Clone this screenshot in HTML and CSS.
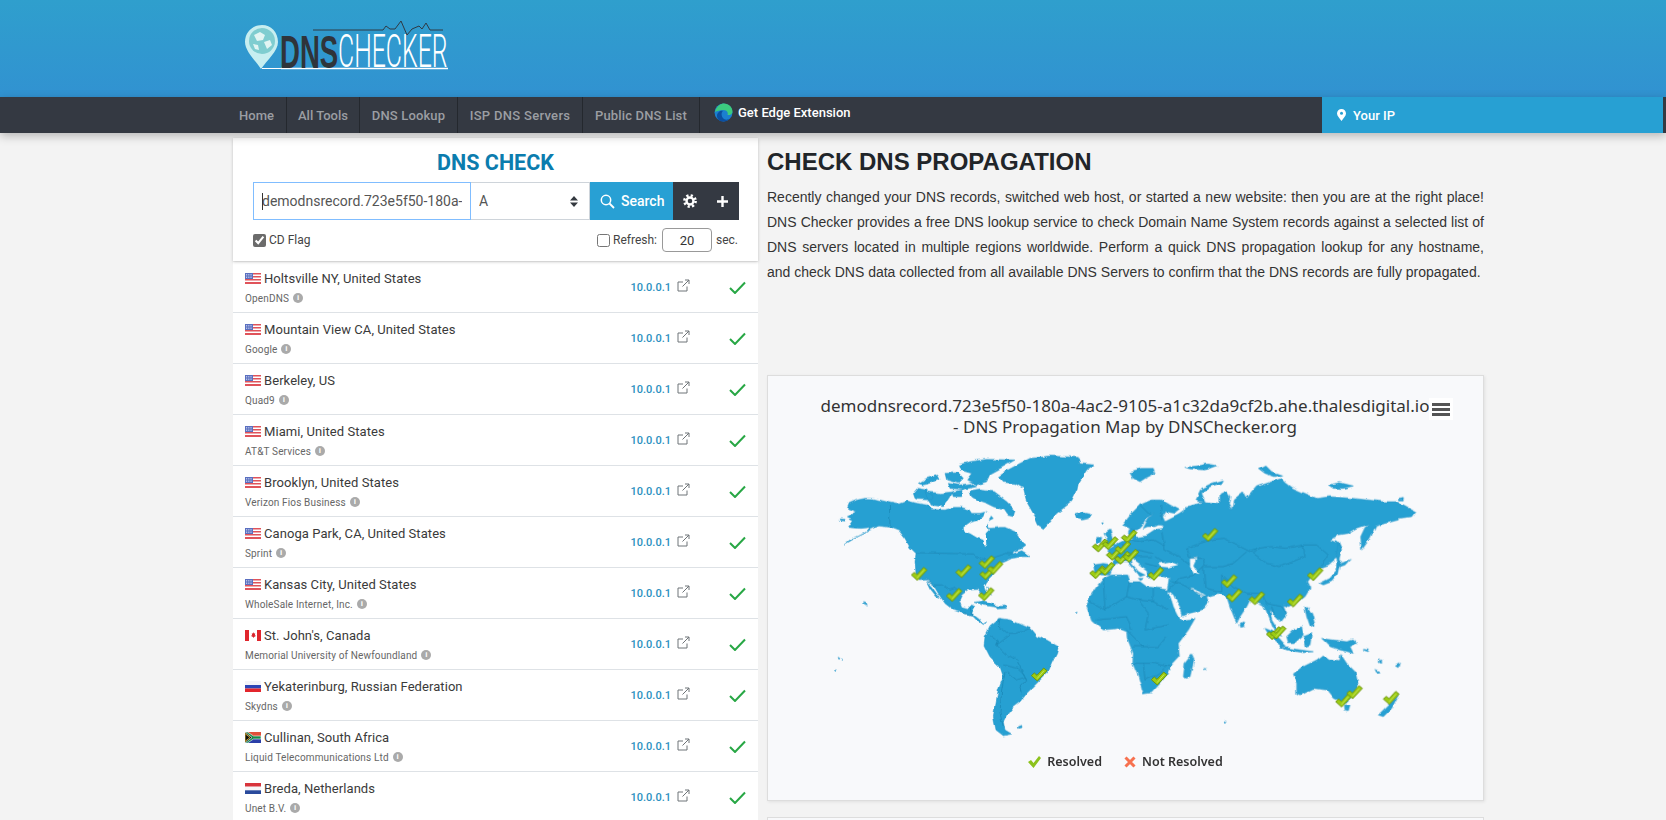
FILE: index.html
```html
<!DOCTYPE html>
<html lang="en">
<head>
<meta charset="utf-8">
<title>DNS Checker - DNS Check Propagation</title>
<link rel="stylesheet" href="styles.css">
</head>
<body>
<svg class="defs" width="0" height="0" aria-hidden="true">
  <defs>
    <symbol id="f-us" viewBox="0 0 16 11"><rect width="16" height="11" fill="#fff"/><path d="M0 0h16v1.500H0zM0 3h16v1.500H0zM0 6h16v1.500H0zM0 9h16v2H0z" fill="#e0535a"/><rect width="8" height="6" fill="#5a6fc0"/><path d="M1 1.500h6M1 3h6M1 4.500h6" stroke="#dfe6f7" stroke-width=".7" stroke-dasharray="1 .8"/></symbol>
    <symbol id="f-ca" viewBox="0 0 16 11"><rect width="16" height="11" fill="#fff"/><rect width="4" height="11" fill="#e0262d"/><rect x="12" width="4" height="11" fill="#e0262d"/><path d="M8 2l1 1.600 1.200-.4-.4 2.300 1-.3-.5 1.300-1.500.4V8h-.6V6.900l-1.500-.4-.5-1.300 1 .3-.4-2.300 1.200.4z" fill="#d9222a"/></symbol>
    <symbol id="f-ru" viewBox="0 0 16 11"><rect width="16" height="4" fill="#f4f4f8"/><rect y="4" width="16" height="3.500" fill="#2c45b5"/><rect y="7.500" width="16" height="3.500" fill="#e3252c"/></symbol>
    <symbol id="f-za" viewBox="0 0 16 11"><rect width="16" height="5.500" fill="#e0503a"/><rect y="5.500" width="16" height="5.500" fill="#2b3fa8"/><path d="M0 0l7 5.500L0 11" fill="#111"/><path d="M0 0h2.500l6 4H16v3H8.500l-6 4H0l7-5.500z" fill="#168a4a" stroke="#fff" stroke-width=".6"/><path d="M0 1.500l5 4-5 4z" fill="#111" stroke="#f3c530" stroke-width=".8"/></symbol>
    <symbol id="f-nl" viewBox="0 0 16 11"><rect width="16" height="3.700" fill="#d8343c"/><rect y="3.700" width="16" height="3.600" fill="#f6f6f8"/><rect y="7.300" width="16" height="3.700" fill="#2a4a9c"/></symbol>
    <symbol id="i-ext" viewBox="0 0 13 13"><path d="M10 7.500V12H1V3h5M5.500 7.500L12 1M8 1h4v4" fill="none" stroke="#6f7478" stroke-width="1"/></symbol>
    <symbol id="i-ok" viewBox="0 0 17 13"><path d="M1 7l5 5L16 1.500" fill="none" stroke="#28a745" stroke-width="2"/></symbol>
    <g id="chk">
      <path d="M-23 5l9-8 8 7 20-22 10 8-29 31z" fill="#9ccc12" stroke="#6d9412" stroke-width="3"/>
      <path d="M-6 14l21-24" stroke="#c6e45a" stroke-width="3" fill="none"/>
    </g>
    <filter id="rough" x="-5%" y="-5%" width="110%" height="110%">
      <feTurbulence type="fractalNoise" baseFrequency=".035" numOctaves="3" seed="4" result="n"/>
      <feDisplacementMap in="SourceGraphic" in2="n" scale="12" xChannelSelector="R" yChannelSelector="G"/>
    </filter>
  </defs>
</svg>

<header class="brand">
  <a class="logo" href="#" aria-label="DNS Checker">
    <svg width="210" height="68" viewBox="0 0 210 68">
      <g transform="translate(0 10)">
        <path d="M17 2C8 2 0 9 0 19c0 9 10 18 16 27 6-9 17-18 17-27C33 9 26 2 17 2z" fill="#c7eef0"/>
        <circle cx="17" cy="18" r="13" fill="#7fcdd0"/>
        <path d="M9 12l6-3 5 3-2 5-6 1zM19 19l6-2 2 5-5 4zM8 21l5 1 1 5-4-1z" fill="#e2f5f3"/>
        <path d="M17 45.500h20" stroke="#fff" stroke-width="1"/>
        <path d="M36 45.500h167" stroke="#fff" stroke-width="1.500"/>
        <path d="M68 7h70l3-4 4 3h5l6-8 6 14 5-6 7-3 3 3 4-6 4 7h13" fill="none" stroke="#2f3a44" stroke-width="1"/>
      </g>
      <text class="logo-dns" transform="translate(35 55) scale(.6 1)">DNS</text>
      <text class="logo-chk" transform="translate(93 54) scale(.54 1)">CHECKER</text>
    </svg>
  </a>
</header>

<nav class="topnav">
  <ul class="menu">
    <li class="m-home"><a href="#">Home</a></li>
    <li class="m-tools"><a href="#">All Tools</a></li>
    <li class="m-lookup"><a href="#">DNS Lookup</a></li>
    <li class="m-isp"><a href="#">ISP DNS Servers</a></li>
    <li class="m-public"><a href="#">Public DNS List</a></li>
    <li class="edge">
      <a href="#">
        <svg width="19" height="19" viewBox="0 0 19 19"><circle cx="9.500" cy="9.500" r="9" fill="#1b7fd0"/><path d="M1 9C2 3 7 .5 10 .5c5 0 8.500 4 8.500 8 0 3-3 4-5 3.500 1-2-.5-5-4-5C6 7 3 8 1 9z" fill="#3ccb7f"/><path d="M3 13c0-4 4-6 6-5-2 1-2 6 1 8 2 1 4 1 6-1-2 3-5 3.500-7 3.500-3 0-6-2-6-5.500z" fill="#0b4fa0"/></svg>
        Get Edge Extension
      </a>
    </li>
  </ul>
  <a class="yourip" href="#">
    <svg width="9" height="12" viewBox="0 0 9 12"><path d="M4.500 0C2 0 0 2 0 4.500 0 7 3 9.500 4.500 12 6 9.500 9 7 9 4.500 9 2 7 0 4.500 0z" fill="#fff"/><circle cx="4.500" cy="4.300" r="1.500" fill="#27a0d3"/></svg>
    Your IP
  </a>
</nav>

<main class="layout">
  <section class="checker">
    <form class="search">
      <h2 class="search-title">DNS CHECK</h2>
      <div class="controls">
        <div class="host"><input class="host-input" type="text" value="demodnsrecord.723e5f50-180a-4ac2-9105-a1c32da9cf2b.ahe.thalesdigital.io"></div>
        <div class="type">
          <select class="type-select"><option>A</option></select>
          <svg class="type-arrows" width="8" height="11" viewBox="0 0 8 11"><path d="M4 0l4 4.500H0zM4 11L0 6.500h8z" fill="#343a40"/></svg>
        </div>
        <button class="go" type="button">
          <svg width="15" height="15" viewBox="0 0 15 15"><circle cx="6" cy="6" r="4.700" fill="none" stroke="#fff" stroke-width="1.500"/><path d="M9.500 9.500L14 14" stroke="#fff" stroke-width="1.800"/></svg>
          Search
        </button>
        <div class="tools">
          <svg width="14" height="14" viewBox="0 0 14 14"><circle cx="7" cy="7" r="5.600" fill="none" stroke="#fff" stroke-width="2.600" stroke-dasharray="2.200 2.200"/><circle cx="7" cy="7" r="3.500" fill="none" stroke="#fff" stroke-width="2.400"/></svg>
          <svg width="13" height="13" viewBox="0 0 13 13"><path d="M6.500 1v11M1 6.500h11" stroke="#fff" stroke-width="2.400"/></svg>
        </div>
      </div>
      <div class="options">
        <label class="opt"><input type="checkbox" checked>CD Flag</label>
        <div class="refresh">
          <label class="opt"><input type="checkbox">Refresh:</label>
          <input class="secs" type="text" value="20">
          <span>sec.</span>
        </div>
      </div>
    </form>

    <ul class="results">
      <li class="row"><div class="who"><div class="place"><svg class="flag"><use href="#f-us"/></svg>Holtsville NY, United States</div><div class="isp">OpenDNS<span class="info">i</span></div></div><a class="ip" href="#">10.0.0.1</a><svg class="ext"><use href="#i-ext"/></svg><svg class="ok"><use href="#i-ok"/></svg></li>
      <li class="row"><div class="who"><div class="place"><svg class="flag"><use href="#f-us"/></svg>Mountain View CA, United States</div><div class="isp">Google<span class="info">i</span></div></div><a class="ip" href="#">10.0.0.1</a><svg class="ext"><use href="#i-ext"/></svg><svg class="ok"><use href="#i-ok"/></svg></li>
      <li class="row"><div class="who"><div class="place"><svg class="flag"><use href="#f-us"/></svg>Berkeley, US</div><div class="isp">Quad9<span class="info">i</span></div></div><a class="ip" href="#">10.0.0.1</a><svg class="ext"><use href="#i-ext"/></svg><svg class="ok"><use href="#i-ok"/></svg></li>
      <li class="row"><div class="who"><div class="place"><svg class="flag"><use href="#f-us"/></svg>Miami, United States</div><div class="isp">AT&amp;T Services<span class="info">i</span></div></div><a class="ip" href="#">10.0.0.1</a><svg class="ext"><use href="#i-ext"/></svg><svg class="ok"><use href="#i-ok"/></svg></li>
      <li class="row"><div class="who"><div class="place"><svg class="flag"><use href="#f-us"/></svg>Brooklyn, United States</div><div class="isp">Verizon Fios Business<span class="info">i</span></div></div><a class="ip" href="#">10.0.0.1</a><svg class="ext"><use href="#i-ext"/></svg><svg class="ok"><use href="#i-ok"/></svg></li>
      <li class="row"><div class="who"><div class="place"><svg class="flag"><use href="#f-us"/></svg>Canoga Park, CA, United States</div><div class="isp">Sprint<span class="info">i</span></div></div><a class="ip" href="#">10.0.0.1</a><svg class="ext"><use href="#i-ext"/></svg><svg class="ok"><use href="#i-ok"/></svg></li>
      <li class="row"><div class="who"><div class="place"><svg class="flag"><use href="#f-us"/></svg>Kansas City, United States</div><div class="isp">WholeSale Internet, Inc.<span class="info">i</span></div></div><a class="ip" href="#">10.0.0.1</a><svg class="ext"><use href="#i-ext"/></svg><svg class="ok"><use href="#i-ok"/></svg></li>
      <li class="row"><div class="who"><div class="place"><svg class="flag"><use href="#f-ca"/></svg>St. John's, Canada</div><div class="isp">Memorial University of Newfoundland<span class="info">i</span></div></div><a class="ip" href="#">10.0.0.1</a><svg class="ext"><use href="#i-ext"/></svg><svg class="ok"><use href="#i-ok"/></svg></li>
      <li class="row"><div class="who"><div class="place"><svg class="flag"><use href="#f-ru"/></svg>Yekaterinburg, Russian Federation</div><div class="isp">Skydns<span class="info">i</span></div></div><a class="ip" href="#">10.0.0.1</a><svg class="ext"><use href="#i-ext"/></svg><svg class="ok"><use href="#i-ok"/></svg></li>
      <li class="row"><div class="who"><div class="place"><svg class="flag"><use href="#f-za"/></svg>Cullinan, South Africa</div><div class="isp">Liquid Telecommunications Ltd<span class="info">i</span></div></div><a class="ip" href="#">10.0.0.1</a><svg class="ext"><use href="#i-ext"/></svg><svg class="ok"><use href="#i-ok"/></svg></li>
      <li class="row"><div class="who"><div class="place"><svg class="flag"><use href="#f-nl"/></svg>Breda, Netherlands</div><div class="isp">Unet B.V.<span class="info">i</span></div></div><a class="ip" href="#">10.0.0.1</a><svg class="ext"><use href="#i-ext"/></svg><svg class="ok"><use href="#i-ok"/></svg></li>
    </ul>
  </section>

  <section class="about">
    <h1 class="about-title">CHECK DNS PROPAGATION</h1>
    <p class="about-text">Recently changed your DNS records, switched web host, or started a new website: then you are at the right place!<br>DNS Checker provides a free DNS lookup service to check Domain Name System records against a selected list of<br>DNS servers located in multiple regions worldwide. Perform a quick DNS propagation lookup for any hostname,<span class="about-last">and check DNS data collected from all available DNS Servers to confirm that the DNS records are fully propagated.</span></p>

    <figure class="mapcard">
      <figcaption class="map-title">demodnsrecord.723e5f50-180a-4ac2-9105-a1c32da9cf2b.ahe.thalesdigital.io<br>- DNS Propagation Map by DNSChecker.org</figcaption>
      <div class="map-menu"><svg width="18" height="13" viewBox="0 0 18 13"><path d="M0 0h18v3H0zM0 5h18v3H0zM0 10h18v3H0z" fill="#555"/></svg></div>
      <svg class="worldmap" width="590" height="300" viewBox="0 0 1770 900">
        <g filter="url(#rough)">
        <g class="land">
          <path d="M58 160L82 150 105 145 130 146 178 158 203 163 232 153 262 160 290 165 305 178 345 180 372 172 395 172 418 180 425 190 450 190 470 185 490 205 470 215 480 235 510 232 525 232 555 245 570 268 588 285 575 295 550 305 548 312 575 302 585 308 600 320 575 320 545 325 525 335 510 340 495 360 488 378 470 395 462 410 470 440 460 440 445 418 415 420 395 435 388 450 395 470 415 475 425 465 435 470 425 490 445 505 460 525 470 518 462 528 445 515 425 495 400 490 370 480 345 460 325 430 310 405 290 390 268 392 258 370 255 335 258 310 240 292 225 265 205 240 185 232 147 228 120 240 80 262 45 282 60 270 105 250 120 232 90 235 55 232 70 210 52 200 78 185 52 175Z"/>
          <path d="M290 395L305 410 330 445 320 440 300 415ZM250 130L262 115 290 120 310 140 300 150 262 148 255 145ZM265 100L290 85 325 75 330 85 300 100 280 105ZM345 70L385 68 400 85 385 100 350 90ZM285 125L330 130 370 125 355 150 340 170 300 165ZM365 125L400 120 395 140 370 140ZM355 100L385 105 420 100 440 110 400 118 360 115ZM385 45L420 35 470 28 555 30 520 50 480 72 470 95 440 105 410 90 425 70 390 60ZM420 125L450 120 490 125 530 155 555 180 550 200 530 195 520 180 490 170 470 160 440 150 425 140Z"/>
          <path d="M505 80L530 62 570 40 600 25 660 18 745 22 750 38 795 42 770 60 745 100 740 125 725 155 680 190 650 225 640 235 625 225 610 190 590 155 580 115 555 100 520 97ZM735 192L760 185 785 190 775 205 755 210 740 205ZM432 457L460 452 490 462 515 472 490 470 460 465ZM500 470L525 468 530 475 505 477ZM97 458L108 460 112 468 102 464ZM565 830L575 826 576 833 566 835ZM30 207L45 208 45 213 33 212ZM470 410L478 430 485 435 475 425ZM24 622L30 625 27 628ZM38 627L42 630 36 630ZM13 660L18 661 16 664ZM736 487L742 487 740 490ZM815 215L820 216 818 220Z"/>
          <path d="M465 560L480 530 510 505 540 510 565 520 600 535 620 560 650 570 685 590 680 610 665 640 655 665 620 700 590 730 570 755 550 770 530 795 520 815 525 840 545 852 520 857 498 840 490 800 498 760 505 720 520 680 510 650 480 620 462 585Z"/>
          <g transform="translate(780)">
            <path d="M10 345L40 340 68 345 78 320 60 310 50 300 75 285 105 270 125 265 115 250 120 235 135 240 140 262 170 258 200 238 215 235 222 228 205 225 195 230 172 230 160 235 175 205 188 192 170 205 155 230 145 240 125 238 98 225 125 190 150 165 185 150 215 150 240 165 268 180 255 190 228 185 218 200 225 215 265 195 280 185 285 170 310 165 345 155 390 160 390 135 410 125 420 140 415 160 425 180 430 150 460 125 470 145 500 110 530 100 575 85 590 100 610 115 680 145 720 140 790 145 880 155 920 155 975 185 965 200 925 205 925 210 880 222 858 228 840 265 815 300 812 260 825 232 840 222 800 235 775 250 745 255 720 270 745 280 755 300 745 320 715 345 700 350 690 360 665 375 650 395 660 415 645 440 625 455 595 470 580 465 590 490 570 515 550 490 540 480 545 510 560 535 575 560 550 535 530 485 520 465 500 455 480 450 470 470 450 500 440 520 420 470 410 440 385 430 350 440 355 455 335 480 275 498 270 470 245 430 235 420 240 385 200 375 175 385 170 360 145 340 125 325 125 340 145 365 165 375 150 380 135 360 115 335 100 335 80 340 68 350 60 375 35 375 15 372Z"/>
            <path d="M0 440L20 410 40 385 65 375 110 375 118 395 150 395 170 410 210 415 235 420 250 470 270 510 280 510 315 505 295 540 265 580 268 620 240 650 230 675 210 700 185 728 160 732 145 680 128 640 130 610 112 565 110 545 85 535 40 540 5 510-10 470Z"/>
            <path d="M280 680L285 640 305 615 312 630 300 680 285 685ZM450 520L460 515 462 530 452 532ZM45 250L60 240 65 260 75 285 45 290 55 270ZM20 262L38 262 35 280 20 280ZM318 150L335 115 365 100 400 90 395 100 360 110 335 130 345 155 325 155ZM120 65L155 55 190 55 195 70 165 85 150 95 130 85ZM285 52L320 48 350 42 380 47 345 60 300 57ZM505 55L525 45 545 65 575 75 555 80 525 70ZM715 105L750 98 790 108 760 115 730 115ZM925 145L940 142 940 150 925 150ZM745 278L752 300 745 345 738 320ZM690 400L720 385 740 360 745 330 755 335 745 370 725 395 700 405ZM745 345L780 328 765 345 750 350ZM645 470L655 470 650 490ZM645 475L665 490 675 525 660 530 650 500ZM590 560L610 540 635 530 640 555 615 578 595 578ZM525 535L550 545 590 590 575 590 540 560ZM570 590L620 598 670 605 640 608 590 600ZM640 560L665 550 660 585 645 590ZM695 565L730 570 770 575 790 570 800 580 780 590 790 610 750 600 720 590ZM610 675L640 650 680 630 700 615 720 630 745 635 750 610 770 640 795 665 805 710 790 735 765 760 730 745 710 720 670 715 630 735 620 730 620 700ZM763 765L780 765 775 782 765 780ZM865 795L890 770 925 735 905 775 880 800ZM820 598L838 600 835 608 822 604ZM868 630L875 630 875 640 868 638ZM855 658L868 665 860 668ZM916 645L928 638 925 650ZM400 812L408 814 404 818ZM342 655L348 656 345 660ZM145 385L160 385 152 392Z"/>
          </g>
        </g>
        <g class="water">
          <path d="M400 232L420 218 445 212 460 200 465 185 480 190 490 175 480 205 470 225 480 240 470 250 472 285 465 290 460 270 440 262 420 250 405 245Z"/>
          <g transform="translate(780)">
            <path d="M235 425L250 435 275 495 265 490 250 460ZM302 415L335 440 345 437 320 420ZM300 325L320 322 310 345 328 375 312 372 300 350ZM205 340L240 335 265 345 235 352 210 350Z"/>
          </g>
        </g>
        <g class="borders">
          <path d="M258 308L430 312 440 320 470 330 500 320 530 310 548 312M178 158L180 232M290 390L310 405 335 405 360 420 375 415 395 435M400 488L425 495 420 470M510 505L505 530 530 550 560 550 600 535M540 555L500 585 525 610 560 630 575 660 590 690 570 710 575 735M525 665L515 720 510 790 520 830M520 645L565 655 590 680 560 690 530 665M478 555L505 575 500 590"/>
          <g transform="translate(780)">
            <path d="M292 295L330 280 370 268 400 265 440 285 480 305 510 295 540 290 590 295 640 285 680 285 715 315 695 345M215 245L225 300 265 320 300 345M500 300L490 310 530 340 570 350 645 320 640 285M292 295L300 325 340 325 345 350 400 350 430 340 470 305M395 375L430 410 470 430 520 430 530 460M340 350L345 415 395 425 395 375M315 375L340 350M245 395L280 405 345 440M530 460L575 470 590 490M545 470L555 500M40 385L45 480M0 455L45 480 110 440 118 395M110 440L145 450 190 455 235 480M145 450L175 490 165 540 190 535 235 525M190 415L190 455M20 510L70 505 110 500 125 540M110 540L160 590 205 590 230 560M130 590L160 590M130 640L190 640 240 650M160 640L165 690 190 680 230 650M120 270L150 275 190 270 225 290M140 300L190 310M100 280L110 320M125 320L185 320M195 320L225 340M165 340L200 350M215 165L215 210M150 165L180 195M235 420L270 385 315 375"/>
          </g>
        </g>
        </g>
        <g class="marks">
          <use href="#chk" x="267" y="370"/><use href="#chk" x="400" y="362"/><use href="#chk" x="470" y="335"/><use href="#chk" x="472" y="368"/><use href="#chk" x="495" y="352"/><use href="#chk" x="372" y="433"/><use href="#chk" x="468" y="431"/><use href="#chk" x="627" y="672"/>
          <g transform="translate(780)">
            <use href="#chk" x="30" y="285"/><use href="#chk" x="60" y="278"/><use href="#chk" x="117" y="258"/><use href="#chk" x="72" y="310"/><use href="#chk" x="97" y="322"/><use href="#chk" x="98" y="292"/><use href="#chk" x="122" y="316"/><use href="#chk" x="22" y="365"/><use href="#chk" x="50" y="355"/><use href="#chk" x="197" y="370"/><use href="#chk" x="360" y="253"/><use href="#chk" x="417" y="392"/><use href="#chk" x="432" y="435"/><use href="#chk" x="500" y="443"/><use href="#chk" x="615" y="450"/><use href="#chk" x="675" y="371"/><use href="#chk" x="207" y="684"/><use href="#chk" x="552" y="548"/><use href="#chk" x="564" y="546"/><use href="#chk" x="760" y="750"/><use href="#chk" x="793" y="725"/><use href="#chk" x="903" y="742"/>
          </g>
        </g>
      </svg>
      <div class="legend">
        <span class="legend-item"><svg width="13" height="12" viewBox="0 0 13 12"><path d="M0 6l3-2 2.500 3L11 0l2 2-7.500 10z" fill="#8cc21d"/></svg>Resolved</span>
        <span class="legend-item"><svg width="12" height="12" viewBox="0 0 12 12"><path d="M1.500 1.500l9 9M10.500 1.500l-9 9" stroke="#f7714f" stroke-width="3"/></svg>Not Resolved</span>
      </div>
    </figure>
    <div class="nextcard"></div>
  </section>
</main>
</body>
</html>
```
FILE: styles.css
```css
* { box-sizing: border-box; }
html, body { height: 100%; overflow: hidden; }
body { margin: 0; background: #f3f3f3; font-family: Roboto, "Liberation Sans", Arial, sans-serif; color: #333; }
ul { list-style: none; margin: 0; padding: 0; }
a { text-decoration: none; color: inherit; }
.defs { position: absolute; }

.brand { height: 97px; padding: 13px 0 0 245px; background: linear-gradient(180deg, #2f9fcd, #3192d1); }
.logo { display: block; width: 210px; height: 68px; }
.logo-dns { font: 700 46px "Liberation Sans", sans-serif; fill: #2f343a; }
.logo-chk { font: 300 46px Roboto, sans-serif; fill: #fff; }

.topnav { position: relative; z-index: 2; display: flex; height: 36px; padding-left: 227px; padding-right: 3px; background: #343942; box-shadow: 0 3px 9px rgba(0, 0, 0, .25); }
.menu { display: flex; flex: 1; }
.menu li { display: flex; align-items: center; justify-content: center; border-right: 1px solid #24282e; }
.m-home { width: 60px; }
.m-tools { width: 73px; }
.m-lookup { width: 98px; letter-spacing: .15px; }
.m-isp { width: 125px; letter-spacing: .3px; }
.m-public { width: 117px; letter-spacing: .15px; }
.menu li a { display: flex; align-items: center; font-size: 13px; font-weight: 500; color: #9b9ea3; }
.menu .edge { border-right: 0; }
.menu .edge a { gap: 5px; padding-left: 14px; font-weight: 500; color: #fff; margin-top: -5px; }
.yourip { display: flex; align-items: center; gap: 7px; width: 341px; padding-left: 15px; background: #27a0d3; color: #fff; font-size: 13px; font-weight: 500; }

.layout { display: flex; gap: 9px; padding: 5px 0 0 233px; }
.checker { width: 525px; flex: none; }
.search { height: 123px; padding: 13px 20px 0; background: #fff; box-shadow: 0 1px 3px rgba(0, 0, 0, .2); position: relative; z-index: 1; }
.search-title { margin: 0 0 4px; height: 27px; line-height: 24px; text-align: center; font-size: 21.500px; font-weight: 700; color: #0b7cae; }
.controls { display: flex; height: 38px; }
.host { position: relative; width: 218px; flex: none; }
.host::before { content: ""; position: absolute; left: 9px; top: 11px; width: 1px; height: 17px; background: #333; }
.host-input { width: 100%; height: 100%; padding: 0 8px; border: 1px solid #80bdff; outline: 0; background: #fff; font: 14px Roboto, sans-serif; color: #555; }
.type { position: relative; width: 119px; flex: none; }
.type-select { width: 100%; height: 100%; padding-left: 8px; border: 1px solid #ced4da; border-left: 0; border-radius: 0; outline: 0; appearance: none; background: #fff; font: 14px Roboto, sans-serif; color: #555; }
.type-arrows { position: absolute; right: 12px; top: 14px; }
.go { display: flex; align-items: center; gap: 6px; width: 83px; flex: none; padding: 0 0 0 10px; border: 0; background: #28a0d4; color: #fff; font: 500 14px Roboto, sans-serif; }
.tools { display: flex; align-items: center; gap: 19px; width: 66px; flex: none; padding-left: 10px; background: #343942; }
.options { display: flex; justify-content: space-between; align-items: center; height: 24px; margin-top: 8px; font-size: 12px; color: #444; }
.opt { display: flex; align-items: center; gap: 3px; }
.opt input { width: 13px; height: 13px; margin: 0; accent-color: #6b6b6b; }
.refresh { display: flex; align-items: center; gap: 4px; }
.secs { width: 50px; height: 24px; margin-left: 1px; border: 1px solid #999; border-radius: 4px; background: #fff; outline: 0; text-align: center; font: 13px Roboto, sans-serif; color: #333; }

.results { margin-top: 1px; background: #fff; }
.row { display: flex; align-items: center; height: 51px; padding: 0 12px; border-bottom: 1px solid #dee2e6; }
.who { flex: 1; min-width: 0; }
.place { display: flex; align-items: center; gap: 3px; height: 16px; font-size: 13px; color: #3a3a3a; letter-spacing: .07px; }
.flag { width: 16px; height: 11px; flex: none; }
.isp { display: flex; align-items: center; gap: 4px; height: 12px; margin-top: 6px; font-size: 10px; color: #666; letter-spacing: .15px; }
.info { display: inline-block; width: 10px; height: 10px; border-radius: 50%; background: #aaa; color: #fff; font: 700 8px/10px "Liberation Sans", sans-serif; text-align: center; letter-spacing: 0; }
.ip { font-size: 11px; font-weight: 500; color: #2a8fc0; }
.ext { width: 13px; height: 13px; margin: -3px 0 0 6px; flex: none; }
.ok { width: 17px; height: 13px; margin-left: 39px; flex: none; }

.about { width: 717px; flex: none; }
.about-title { margin: 9px 0 0; height: 30px; font: 700 24px/30px "Liberation Sans", Arial, sans-serif; color: #212529; }
.about-text { margin: 8px 0 0; height: 190px; font: 14px/25px "Liberation Sans", Arial, sans-serif; color: #333; text-align: justify; text-align-last: justify; }
.about-last { display: block; text-align-last: left; white-space: nowrap; }
.mapcard { position: relative; margin: 0; height: 426px; padding-top: 19px; background: #f8f9fb; border: 1px solid #ddd; box-shadow: 1px 1px 3px rgba(0, 0, 0, .08); }
.map-title { margin: 0; padding-right: 1px; text-align: center; font: 17px/21px "Noto Sans", sans-serif; color: #333; white-space: nowrap; }
.map-menu { position: absolute; top: 22px; right: 30px; display: flex; align-items: center; justify-content: center; width: 24px; height: 22px; background: #fff; }
.worldmap { display: block; margin: 13px 0 0 62px; }
.land { fill: #27a0d2; stroke: #2193c6; stroke-width: 1.5; stroke-linejoin: round; }
.water { fill: #f8f9fb; stroke: none; }
.borders { fill: none; stroke: #1a86b5; stroke-width: 2.2; stroke-linejoin: round; }
.legend { display: flex; justify-content: center; gap: 22px; height: 20px; margin-top: 2px; padding-right: 0; font: 600 12.500px/20px "Noto Sans", sans-serif; color: #333; }
.legend-item { display: flex; align-items: center; gap: 6px; }
.nextcard { height: 60px; margin-top: 16px; background: #f8f9fb; border: 1px solid #ddd; }
```
